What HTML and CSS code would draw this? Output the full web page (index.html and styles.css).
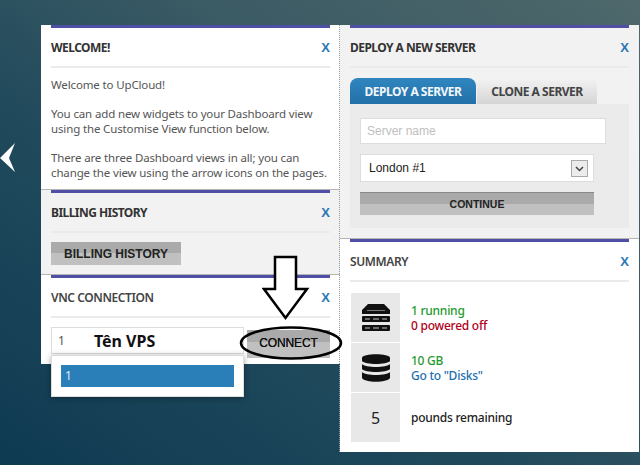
FILE: index.html
```html
<!DOCTYPE html>
<html lang="vi">
<head>
<meta charset="utf-8">
<title>UpCloud Dashboard</title>
<link rel="stylesheet" href="styles.css">
</head>
<body>
<svg class="nav-arrow" width="16" height="30" viewBox="0 0 16 30"><path d="M15 0 L0 15 L15 29 L9 15 Z" fill="#fff"/></svg>
<div class="column">
  <section class="panel welcome">
    <header class="head"><h2>WELCOME!</h2><a class="close">X</a></header>
    <div class="copy">
      <p>Welcome to UpCloud!</p>
      <p>You can add new widgets to your Dashboard view<br>using the Customise View function below.</p>
      <p>There are three Dashboard views in all; you can<br>change the view using the arrow icons on the pages.</p>
    </div>
  </section>
  <section class="panel grey billing">
    <header class="head"><h2>BILLING HISTORY</h2><a class="close">X</a></header>
    <button class="btn btn-billing">BILLING HISTORY</button>
  </section>
  <section class="panel vnc">
    <header class="head"><h2 class="light">VNC CONNECTION</h2><a class="close">X</a></header>
    <div class="vnc-row">
      <div class="vnc-select"><span class="vnc-value">1</span><span class="vps-name">Tên VPS</span>
        <div class="dropdown"><div class="option">1</div></div>
      </div>
      <button class="btn btn-connect">CONNECT</button>
    </div>
    <svg class="ellipse" width="104" height="36" viewBox="0 0 104 36"><ellipse cx="52" cy="18" rx="50" ry="15.5" fill="none" stroke="#000" stroke-width="2.5"/></svg>
    <svg class="down-arrow" width="48" height="66" viewBox="0 0 48 66"><path d="M13 2 H34 V34 H45 L23.500 63 L2 34 H13 Z" fill="#fff" stroke="#000" stroke-width="2.500"/></svg>
  </section>
</div>
<div class="column right">
  <section class="panel grey deploy">
    <header class="head"><h2>DEPLOY A NEW SERVER</h2><a class="close">X</a></header>
    <div class="tabs"><span class="tab active">DEPLOY A SERVER</span><span class="tab">CLONE A SERVER</span></div>
    <div class="tab-body">
      <div class="field field-name">Server name</div>
      <div class="field field-select"><span>London #1</span>
        <svg class="caret" width="17" height="17" viewBox="0 0 17 17"><rect x=".5" y=".5" width="16" height="16" fill="#ececec" stroke="#aaa"/><path d="M5 7 L8.500 10.500 L12 7" fill="none" stroke="#444" stroke-width="1.500"/></svg>
      </div>
      <button class="btn btn-continue">CONTINUE</button>
    </div>
  </section>
  <section class="panel summary">
    <header class="head"><h2 class="light">SUMMARY</h2><a class="close">X</a></header>
    <div class="stat">
      <div class="cell"><svg width="28" height="27" viewBox="0 0 28 27"><path d="M6 0 H22 L28 6 V10 H0 V6 Z" fill="#111"/><path d="M5 6 H23 V7 H5 Z" fill="#777"/><rect y="12" width="28" height="6" rx="1" fill="#111"/><rect y="21" width="28" height="6" rx="1" fill="#111"/><path d="M3 15 H8 M20 15 H25 M3 24 H8 M20 24 H25 M11 15 H17 M11 24 H17" stroke="#888" stroke-width="1.500"/></svg></div>
      <div class="stat-text"><span class="green">1 running</span><span class="red">0 powered off</span></div>
    </div>
    <div class="stat">
      <div class="cell"><svg width="28" height="28" viewBox="0 0 28 28"><path d="M0 4 C0 -1 28 -1 28 4 V7 C25 11 3 11 0 7 Z" fill="#111"/><path d="M0 10 C3 14 25 14 28 10 V15 C25 19 3 19 0 15 Z" fill="#111"/><path d="M0 18 C3 22 25 22 28 18 V24 C25 29 3 29 0 24 Z" fill="#111"/></svg></div>
      <div class="stat-text"><span class="green">10 GB</span><span class="blue">Go to "Disks"</span></div>
    </div>
    <div class="stat">
      <div class="cell number">5</div>
      <div class="stat-text"><span class="dark">pounds remaining</span></div>
    </div>
  </section>
</div>
</body>
</html>
```
FILE: styles.css
```css
* { box-sizing: border-box; }
html, body { margin: 0; height: 465px; overflow: hidden; }
body {
  position: relative;
  display: flex;
  align-items: flex-start;
  padding: 25px 0 0 41px;
  font-family: "Noto Sans", "Open Sans", sans-serif;
  font-size: 12px;
  color: #555;
  background: linear-gradient(35deg, #0e3a52 0%, #214a5c 40%, #3a5a64 65%, #4e686b 100%);
}
.nav-arrow { position: absolute; left: 0; top: 143px; }
.column { width: 299px; display: flex; flex-direction: column; }
.right { position: relative; z-index: 1; width: 300px; margin-left: -1px; border-left: 1px dotted #8a9a9c; }
.panel { position: relative; background: #fff; padding: 0 10px; }
.panel::before { content: ""; display: block; height: 3px; background: #4f4fa5; }
.grey { background: #f2f2f2; }
.welcome { height: 165px; border-bottom: 1px solid #b5b5b5; }
.billing { height: 85px; border-bottom: 1px solid #b5b5b5; }
.vnc { height: 89px; }
.deploy { height: 214px; border-bottom: 1px solid #b5b5b5; }
.summary { height: 213px; }
.head {
  height: 40px;
  display: flex;
  justify-content: space-between;
  align-items: center;
  border-bottom: 2px solid #ebebeb;
}
h2 { margin: 0; font-size: 12px; font-weight: 700; letter-spacing: -.55px; color: #333; }
h2.light { font-weight: 600; color: #444; letter-spacing: -.4px; }
.close { color: #2a78b4; font-size: 13px; font-weight: 700; font-family: "Liberation Sans", sans-serif; }
.copy { padding-top: 9px; font-size: 11.500px; line-height: 15px; white-space: nowrap; letter-spacing: -.14px; }
.copy p { margin: 0 0 14px; }
.btn {
  border: 0;
  padding: 0;
  display: block;
  font-family: "Liberation Sans", sans-serif;
  color: #222;
  background: linear-gradient(#aaa 0, #aaa 50%, #c0c0c0 50%, #c0c0c0 100%);
}
.btn-billing { width: 130px; height: 23px; margin-top: 9px; padding-top: 1px; font-size: 12px; font-weight: 700; }
.vnc-row { display: flex; align-items: flex-start; margin-top: 9px; }
.vnc-select {
  position: relative;
  width: 193px;
  height: 27px;
  display: flex;
  align-items: center;
  padding-left: 6px;
  background: #fff;
  border: 1px solid #ddd;
}
.vnc-value { color: #555; }
.vps-name { margin-left: 29px; font-size: 16px; font-weight: 700; color: #111; }
.dropdown {
  position: absolute;
  left: -1px;
  top: 27px;
  width: 193px;
  height: 42px;
  padding: 9px;
  background: #fff;
  border: 1px solid #ddd;
  box-shadow: 0 1px 6px rgba(0, 0, 0, .35);
  z-index: 2;
}
.option { height: 22px; padding-left: 4px; line-height: 22px; background: #2b7fb8; color: #dfeaf2; }
.btn-connect {
  width: 83px;
  height: 28px;
  margin: 3px 0 0 3px;
  padding-bottom: 3px;
  font-size: 12px;
  letter-spacing: -.1px;
  color: #111;
  text-shadow: 0 0 .6px #111;
  background: linear-gradient(#aaa 0, #aaa 43%, #c0c0c0 43%, #c0c0c0 100%);
}
.ellipse { position: absolute; left: 198px; top: 50px; z-index: 3; }
.down-arrow { position: absolute; left: 221px; top: -20px; z-index: 3; }
.tabs { display: flex; gap: 1px; margin-top: 10px; }
.tab {
  height: 26px;
  line-height: 28px;
  text-align: center;
  font-weight: 700;
  letter-spacing: -.5px;
  border-radius: 8px 8px 0 0;
  width: 120px;
  color: #444;
  background: linear-gradient(#f3f3f3, #d5d5d5);
}
.tab.active { width: 126px; color: #f2f6fa; background: linear-gradient(#2f86bf, #2470a8); }
.tab-body { height: 124px; padding: 14px 10px 0; background: #ebebeb; }
.field { background: #fff; border: 1px solid #ddd; display: flex; align-items: center; font-family: "Liberation Sans", sans-serif; }
.field-name { width: 246px; height: 26px; padding-left: 6px; color: #c0c0c0; }
.field-select { width: 234px; height: 28px; margin-top: 10px; padding: 0 5px 0 8px; justify-content: space-between; color: #222; }
.btn-continue { width: 234px; height: 23px; margin-top: 10px; font-size: 10.500px; font-weight: 700; border-top: 1px solid #888; }
.stat { display: flex; align-items: center; height: 49px; margin: 0 0 1px 1px; }
.summary .head + .stat { margin-top: 11px; }
.cell { width: 49px; height: 49px; display: flex; align-items: center; justify-content: center; background: #e8e8e8; }
.number { font-size: 16px; color: #222; }
.stat-text { display: flex; flex-direction: column; margin-left: 11px; line-height: 15px; font-weight: 500; letter-spacing: -.25px; }
.green { color: #1f9a2e; }
.red { color: #b00020; }
.blue { color: #1c6fb0; }
.dark { color: #222; }
```
